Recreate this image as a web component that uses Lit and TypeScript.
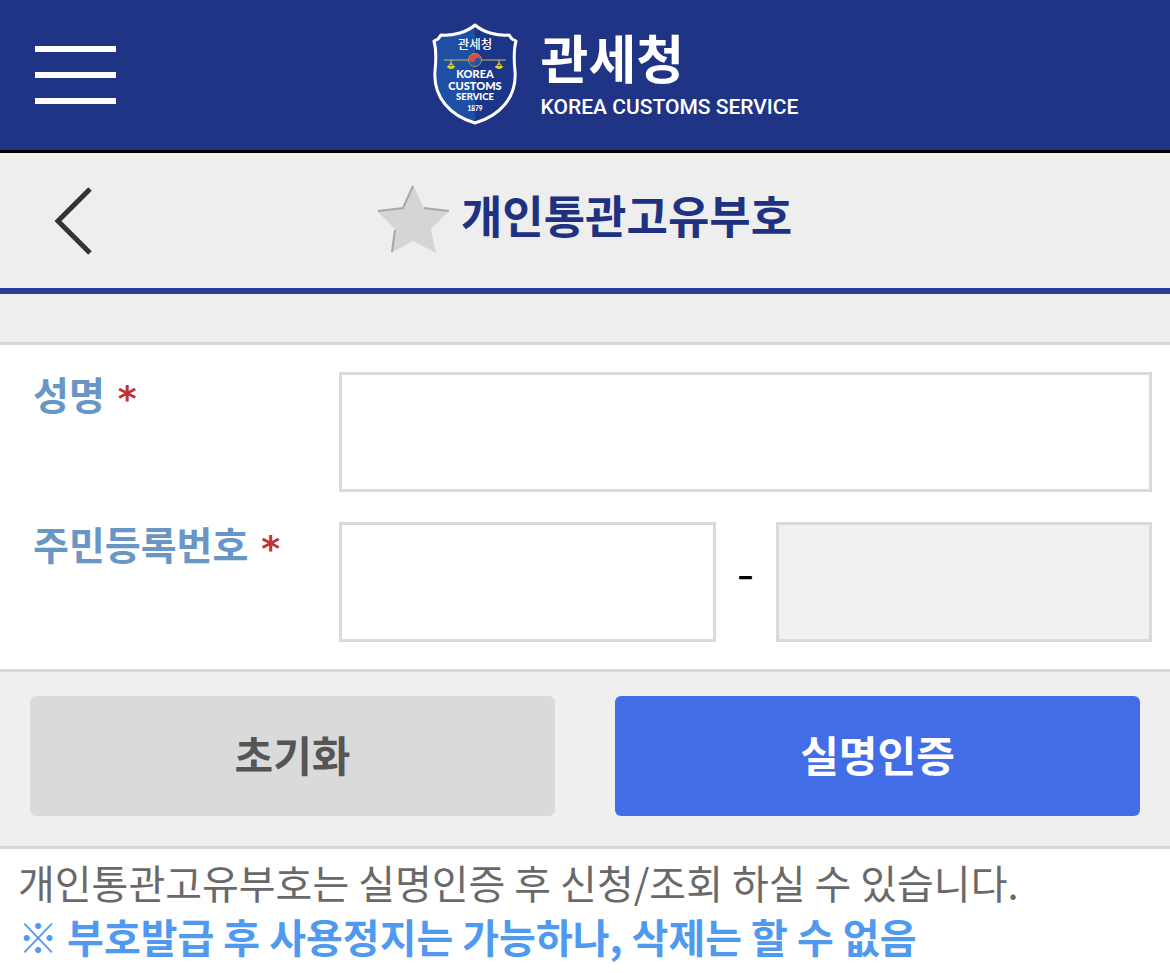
import { LitElement, html, css } from "lit";
import { customElement } from "lit/decorators.js";

@customElement("app-root")
export class AppRoot extends LitElement {
  static styles = css`
    :host {
      display: block;
      min-height: 100vh;
      background: #fff;
      color: #000;
      font-family: "Noto Sans CJK KR", "Noto Sans", sans-serif;
    }
    * { box-sizing: border-box; }
    button { border: 0; margin: 0; padding: 0; background: none; font: inherit; cursor: pointer; }
    svg { display: block; }
    h1, p { margin: 0; }
    .top {
      display: grid;
      grid-template-columns: 1fr auto 1fr;
      align-items: center;
      height: 153px;
      padding: 0 35px;
      background: #203485;
      border-bottom: 3px solid #000;
    }
    .menu { display: flex; flex-direction: column; gap: 20px; width: 81px; }
    .bar { height: 6px; background: #fff; }
    .brand { display: flex; align-items: center; gap: 21px; margin-left: 60px; color: #fff; text-decoration: none; }
    .names { display: flex; flex-direction: column; }
    .ko { padding-top: 4px; font-size: 52px; line-height: 60px; font-weight: 700; }
    .en { font: 500 21px/40px Roboto, sans-serif; }
    .title {
      display: grid;
      grid-template-columns: 1fr auto 1fr;
      align-items: center;
      height: 141px;
      padding: 0 54px;
      background: #eee;
      border-bottom: 6px solid #273f9b;
    }
    .back { width: 38px; }
    .heading { display: flex; align-items: center; gap: 10px; }
    h1 { font-size: 45px; line-height: 64px; font-weight: 700; color: #1f3282; padding-bottom: 12px; }
    .band { height: 48px; background: #efefef; }
    .form {
      display: grid;
      gap: 30px;
      padding: 27px 18px 27px 33px;
      border-top: 3px solid #d6d7db;
      border-bottom: 3px solid #d6d7db;
    }
    .row { display: grid; grid-template-columns: 306px 1fr; }
    .label { display: flex; gap: 13px; font-size: 39px; line-height: 42px; font-weight: 700; color: #6897c6; }
    .req { font: 700 36px/54px "DejaVu Sans", sans-serif; color: #c23433; }
    .pair { display: grid; grid-template-columns: 1fr 60px 1fr; align-items: center; text-align: center; }
    .dash { padding-bottom: 12px; font: 400 40px/48px Inter, sans-serif; }
    input {
      width: 100%;
      height: 120px;
      margin: 0;
      padding: 0 24px;
      border: 3px solid #dadada;
      border-radius: 0;
      background: #fff;
      font: inherit;
      font-size: 40px;
    }
    .locked { background: #f1f1f1; }
    .actions {
      display: grid;
      grid-template-columns: 1fr 1fr;
      gap: 60px;
      padding: 24px 30px 30px;
      background: #efefef;
      border-bottom: 3px solid #d6d7db;
    }
    .btn { height: 120px; padding-bottom: 4px; border-radius: 6px; font-size: 42px; line-height: 60px; font-weight: 700; }
    .reset { background: #dadada; color: #555; }
    .verify { background: #426de7; color: #fff; }
    .notes { padding: 6px 18px; font-size: 40px; line-height: 54px; color: #696969; }
    .warn { font-weight: 700; color: #4f99f0; }
  `;

  render() {
    return html`
      <header class="top">
        <button class="menu" aria-label="메뉴">
          <span class="bar"></span><span class="bar"></span><span class="bar"></span>
        </button>
        <a class="brand" href="#">
          <svg width="88" height="104" viewBox="0 0 88 104" aria-hidden="true">
            <path d="M43 2C35 9 22 13 9 12L6 16L2 18Q5 29 3 48C1 75 19 93 43 100Z" fill="#1e4fa5"/>
            <path d="M43 2C51 9 64 13 77 12L80 16L84 18Q81 29 83 48C85 75 67 93 43 100Z" fill="#1b3589"/>
            <path d="M43 2C51 9 64 13 77 12L80 16L84 18Q81 29 83 48C85 75 67 93 43 100C19 93 1 75 3 48Q5 29 2 18L6 16L9 12C22 13 35 9 43 2Z" fill="none" stroke="#fff" stroke-width="3" stroke-linejoin="round"/>
            <path d="M12 37H74M19 37v5M67 37v5M19 40l-3 4h6zM67 40l-3 4h6z" fill="none" stroke="#c4c13d" stroke-width="1.2"/>
            <path d="M15 43h8q-1 3-4 3t-4-3M63 43h8q-1 3-4 3t-4-3" fill="#d8cf3a"/>
            <circle cx="43" cy="37" r="6.5" fill="#2455a4"/>
            <path d="M36.500 37a6.500 6.500 0 0 1 13 0a3.250 3.250 0 0 0-6.500 0a3.250 3.250 0 0 1-6.500 0z" transform="rotate(20 43 37)" fill="#e1473a"/>
            <circle cx="43" cy="37" r="6.500" fill="none" stroke="#c9a550" stroke-width=".8"/>
            <g fill="#fff" text-anchor="middle" font-family="Lato, sans-serif" font-weight="900">
              <text x="43" y="26" font-size="12.500" font-weight="500" font-family="Noto Sans CJK KR, sans-serif">관세청</text>
              <text x="43" y="55" font-size="11">KOREA</text>
              <text x="43" y="67" font-size="11">CUSTOMS</text>
              <text x="43" y="77" font-size="9.500">SERVICE</text>
              <text x="43" y="88" font-size="6.500">1879</text>
            </g>
          </svg>
          <span class="names"><span class="ko">관세청</span><span class="en">KOREA CUSTOMS SERVICE</span></span>
        </a>
      </header>

      <div class="title">
        <button class="back" aria-label="뒤로">
          <svg width="38" height="68" viewBox="0 0 38 68"><path d="M36 2L4 34L36 66" fill="none" stroke="#333" stroke-width="5"/></svg>
        </button>
        <div class="heading">
          <svg width="73" height="71" viewBox="0 0 73 71" aria-hidden="true">
            <path d="M35 0L46 23L71 26L53 44L58 68L35 56L13 68L17 44L-1 26L24 23Z" fill="#d5d5d5"/>
            <path d="M35 1L25 23L0 26M46 23L71 26M17 45L14 67" fill="none" stroke="#a8a8a8" stroke-width="2"/>
          </svg>
          <h1>개인통관고유부호</h1>
        </div>
      </div>
      <div class="band"></div>

      <form @submit=${(e: Event) => e.preventDefault()}>
        <div class="form">
          <div class="row">
            <label class="label" for="name">성명<span class="req">*</span></label>
            <input id="name" type="text" required />
          </div>
          <div class="row">
            <label class="label" for="front">주민등록번호<span class="req">*</span></label>
            <div class="pair">
              <input id="front" type="text" inputmode="numeric" maxlength="6" required />
              <span class="dash">-</span>
              <input class="locked" type="password" aria-label="주민등록번호 뒷자리" maxlength="7" readonly />
            </div>
          </div>
        </div>
        <div class="actions">
          <button class="btn reset" type="reset">초기화</button>
          <button class="btn verify" type="submit">실명인증</button>
        </div>
      </form>

      <div class="notes">
        <p>개인통관고유부호는 실명인증 후 신청/조회 하실 수 있습니다.</p>
        <p class="warn">※ 부호발급 후 사용정지는 가능하나, 삭제는 할 수 없음</p>
      </div>
    `;
  }
}
